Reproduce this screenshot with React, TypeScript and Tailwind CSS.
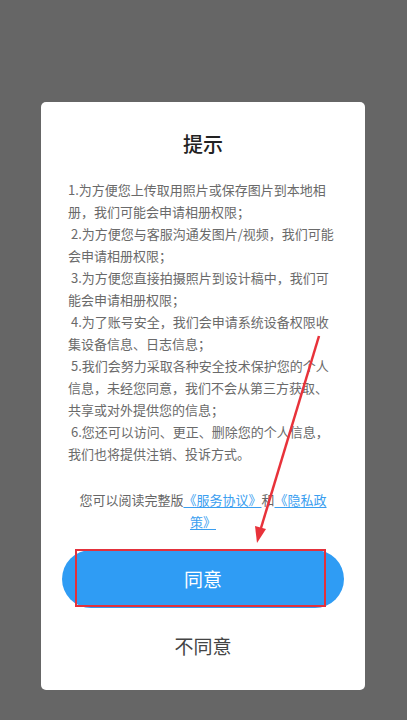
const lines = [
  '1.为方便您上传取用照片或保存图片到本地相',
  '册，我们可能会申请相册权限；',
  ' 2.为方便您与客服沟通发图片/视频，我们可能',
  '会申请相册权限；',
  ' 3.为方便您直接拍摄照片到设计稿中，我们可',
  '能会申请相册权限；',
  ' 4.为了账号安全，我们会申请系统设备权限收',
  '集设备信息、日志信息；',
  ' 5.我们会努力采取各种安全技术保护您的个人',
  '信息，未经您同意，我们不会从第三方获取、',
  '共享或对外提供您的信息；',
  ' 6.您还可以访问、更正、删除您的个人信息，',
  '我们也将提供注销、投诉方式。',
];

export default function App() {
  return (
    <div className="relative min-h-screen w-full bg-[#666666] pt-[102px] font-['Noto_Sans_CJK_SC','Noto_Sans',sans-serif]">
      {/* Dialog */}
      <div className="mx-[41px] flex h-[588px] w-[324px] flex-col items-center rounded-[5px] bg-white">
        <h2 className="mt-[30px] text-[20px] font-medium leading-[24px] text-[#222222]">提示</h2>

        <div className="mt-[23px] w-full pl-[27px] text-[13px] leading-[22px] text-[#6a6a6a]">
          {lines.map((l, i) => (
            <div key={i} className="whitespace-pre">
              {l}
            </div>
          ))}
        </div>

        <div className="mt-[24px] text-center text-[13px] leading-[22px] text-[#666666]">
          <div>
            您可以阅读完整版
            <span className="text-[#3a9ef0] underline underline-offset-2">《服务协议》</span>
            和
            <span className="text-[#3a9ef0] underline underline-offset-2">《隐私政</span>
          </div>
          <div>
            <span className="text-[#3a9ef0] underline underline-offset-2">策》</span>
          </div>
        </div>

        <button className="relative mt-[17px] flex h-[58px] w-[282px] items-center justify-center rounded-full bg-[#2f9cf4] text-[19px] text-white">
          同意
          <span className="absolute left-[13px] top-[-1px] h-[58px] w-[251px] border-[2.5px] border-[#e3313b]"></span>
        </button>

        <div className="mt-[25px] text-[19px] leading-[26px] text-[#444444]">不同意</div>
      </div>

      {/* Annotation arrow */}
      <svg className="pointer-events-none absolute left-0 top-0 h-[720px] w-[407px]" viewBox="0 0 407 720">
        <line x1="319" y1="336" x2="261" y2="528" stroke="#e8323a" strokeWidth="2.5" />
        <polygon points="257,543 266,529 255,526" fill="#e8323a" />
      </svg>
    </div>
  );
}
